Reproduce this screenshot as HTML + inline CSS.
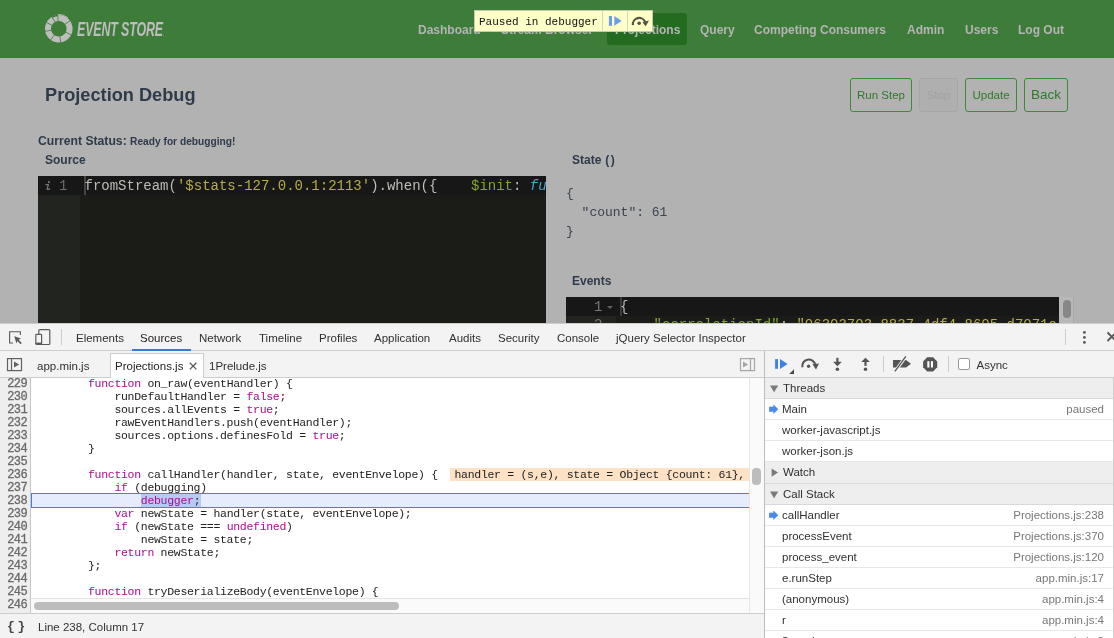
<!DOCTYPE html>
<html><head><meta charset="utf-8">
<style>
*{margin:0;padding:0;box-sizing:border-box}
html,body{width:1114px;height:638px;overflow:hidden;background:#b2b2b2;font-family:"Liberation Sans",sans-serif}
#root{position:absolute;left:0;top:0;width:1114px;height:638px;will-change:transform}
.a{position:absolute;white-space:pre}
#hdr{position:absolute;left:0;top:0;width:1114px;height:58px;background:#3e7c3a;border-bottom:1px solid #387a33}
.nav{position:absolute;top:23px;font-size:12px;font-weight:bold;color:#b4b4b4;line-height:14px}
.ptxt{color:#2d3b4a;font-weight:bold}
.btn{position:absolute;top:78px;height:34px;border:1px solid #3d8a37;border-radius:3px;color:#2e7a2a;font-size:11.5px;text-align:center;line-height:32px}
.mono{font-family:"Liberation Mono",monospace}
#dt{position:absolute;left:0;top:323px;width:1114px;height:315px;background:#fff;font-size:11.5px;color:#303030}
.code{position:absolute;font-family:"Liberation Mono",monospace;font-size:11.5px;letter-spacing:-0.3px;line-height:13px;white-space:pre;color:#222}
.k{color:#aa0d91}
.row{position:absolute;left:765px;width:348px;height:21px;border-bottom:1px solid #e8e8e8;background:#fff;font-size:11.5px;line-height:20px;color:#303030}
.sec{position:absolute;left:765px;width:348px;background:#eeeeee;border-bottom:1px solid #d8d8d8;font-size:11.5px;line-height:21px;color:#303030}
.r{position:absolute;right:9px;top:0;color:#777}
</style></head><body><div id="root">

<!-- HEADER -->
<div id="hdr"></div>
<svg class="a" style="left:44px;top:14px" width="30" height="30" viewBox="0 0 30 30">
  <circle cx="14.8" cy="14.7" r="10.8" fill="none" stroke="#bdbdbd" stroke-width="6"/>
  <path d="M8.00 3.39 A13.2 13.2 0 0 1 13.65 1.55" fill="none" stroke="#3e7c3a" stroke-width="1.6"/>
  <path d="M13.56 0.55 A14.2 14.2 0 0 1 23.93 3.82" fill="none" stroke="#bdbdbd" stroke-width="1"/>
  <line x1="14.21" y1="7.72" x2="13.54" y2="-0.25" stroke="#3e7c3a" stroke-width="0.8"/>
  <line x1="11.30" y1="8.64" x2="7.30" y2="1.71" stroke="#3e7c3a" stroke-width="0.8"/>
  <line x1="8.56" y1="11.52" x2="1.43" y2="7.89" stroke="#3e7c3a" stroke-width="0.8"/>
  <line x1="7.93" y1="16.04" x2="0.08" y2="17.56" stroke="#3e7c3a" stroke-width="0.8"/>
  <line x1="10.69" y1="20.36" x2="5.98" y2="26.84" stroke="#3e7c3a" stroke-width="0.8"/>
  <line x1="15.77" y1="21.63" x2="16.89" y2="29.55" stroke="#3e7c3a" stroke-width="0.8"/>
  <line x1="21.06" y1="17.83" x2="28.21" y2="21.42" stroke="#3e7c3a" stroke-width="0.8"/>
  <line x1="20.50" y1="10.64" x2="27.01" y2="5.99" stroke="#3e7c3a" stroke-width="0.8"/>
</svg>
<div class="a" style="left:77px;top:19px;font-size:20px;line-height:20px;font-weight:bold;font-style:italic;color:#bdbdbd;transform:scaleX(0.62);transform-origin:0 0;letter-spacing:-0.2px">EVENT STORE<span style="font-size:5px">.</span></div>

<div class="nav" style="left:418px">Dashboard</div>
<div class="nav" style="left:501px">Stream Browser</div>
<div class="a" style="left:607px;top:13px;width:80px;height:32px;background:#236b1f;border-radius:3px"></div>
<div class="nav" style="left:615px">Projections</div>
<div class="nav" style="left:700px">Query</div>
<div class="nav" style="left:754px">Competing Consumers</div>
<div class="nav" style="left:907px">Admin</div>
<div class="nav" style="left:965px">Users</div>
<div class="nav" style="left:1018px">Log Out</div>

<!-- paused overlay -->
<div class="a" style="left:474px;top:10px;width:179px;height:22px;background:#ffffc8;border:1px solid #c8c8b0"></div>
<div class="a mono" style="left:479px;top:15px;font-size:11px;line-height:14px;color:#111">Paused in debugger</div>
<div class="a" style="left:602px;top:11px;width:1px;height:20px;background:#d6d6c0"></div>
<div class="a" style="left:627px;top:11px;width:1px;height:20px;background:#d6d6c0"></div>
<svg class="a" style="left:603px;top:11px" width="24" height="20" viewBox="0 0 24 20">
  <rect x="5.9" y="5" width="3.1" height="9.8" fill="#6a9ee9"/>
  <path d="M11.3 5 L18.7 9.9 L11.3 14.8 Z" fill="#6a9ee9"/>
</svg>
<svg class="a" style="left:628px;top:11px" width="24" height="20" viewBox="0 0 24 20">
  <path d="M4.9 14.2 A6.4 6.4 0 0 1 17.2 11.0" fill="none" stroke="#545448" stroke-width="2.2"/>
  <path d="M14.4 11.2 L21 9.4 L17.8 15.2 Z" fill="#545448"/>
  <circle cx="11.2" cy="12.2" r="1.8" fill="#545448"/>
</svg>

<!-- PAGE -->
<div class="a ptxt" style="left:45px;top:85px;font-size:18.2px;line-height:20.5px">Projection Debug</div>
<div class="btn" style="left:850px;width:62px">Run Step</div>
<div class="btn" style="left:919px;width:39px;border-color:#a6a6a6;background:#afafaf;color:#a2a2a2">Stop</div>
<div class="btn" style="left:965px;width:52px">Update</div>
<div class="btn" style="left:1024px;width:44px;font-size:13.5px">Back</div>

<div class="a ptxt" style="left:38px;top:134px;font-size:12.2px;line-height:14px">Current Status: <span style="font-size:10.2px">Ready for debugging!</span></div>
<div class="a ptxt" style="left:45px;top:153px;font-size:12px;line-height:14px">Source</div>

<!-- source editor -->
<div class="a" style="left:38px;top:176px;width:508px;height:147px;background:#1b1c18"></div>
<div class="a" style="left:38px;top:176px;width:42px;height:147px;background:#22241f"></div>
<div class="a" style="left:38px;top:176px;width:508px;height:19px;background:#171717"></div>
<div class="a" style="left:80px;top:176px;width:1px;height:19px;background:#171717"></div>
<svg class="a" style="left:44px;top:180px" width="8" height="11" viewBox="0 0 8 11"><circle cx="4.9" cy="2.1" r="1.1" fill="#777"/><path d="M1.9 4.6 H4.4 L3.2 8.6 Q3 9.5 4 9.3 L5.6 9" fill="none" stroke="#777" stroke-width="1.3" stroke-linejoin="round" stroke-linecap="round"/></svg>
<div class="a mono" style="left:59px;top:179px;font-size:14px;line-height:15px;color:#6c6c6c">1</div>
<div class="a" style="left:84px;top:176px;width:2px;height:19px;background:#444"></div>
<div class="a mono" style="left:84.5px;top:177.5px;font-size:14px;line-height:16px;color:#bdbdb5;width:461px;overflow:hidden">fromStream(<span style="color:#b8ac48">'$stats-127.0.0.1:2113'</span>).when({    <span style="color:#80a82c">$init</span>: <span style="color:#4aa6c8;font-style:italic">function</span></div>

<div class="a ptxt" style="left:572px;top:153px;font-size:12px;line-height:14px">State <span style="letter-spacing:1.6px;margin-left:0.5px">()</span></div>
<div class="a mono" style="left:566px;top:184px;font-size:13px;line-height:19px;color:#3b4550">{
  "count": 61
}</div>
<div class="a ptxt" style="left:572px;top:274px;font-size:12px;line-height:14px">Events</div>

<!-- events editor -->
<div class="a" style="left:566px;top:297px;width:493px;height:26px;background:#1b1c18;overflow:hidden">
  <div class="a" style="left:0;top:0;width:50px;height:26px;background:#22241f"></div>
  <div class="a" style="left:0;top:0;width:493px;height:19px;background:#171717"></div>
  <div class="a mono" style="left:28px;top:2px;font-size:14px;line-height:16px;color:#777">1</div>
  <div class="a" style="left:41px;top:9px;width:0;height:0;border-left:3px solid transparent;border-right:3px solid transparent;border-top:3px solid #5e5e5e"></div>
  <div class="a" style="left:54px;top:0;width:2px;height:19px;background:#3a3a3a"></div>
  <div class="a mono" style="left:54px;top:2px;font-size:14px;line-height:16px;color:#bdbdb5">{</div>
  <div class="a mono" style="left:28px;top:20px;font-size:14px;line-height:16px;color:#777">2</div>
  <div class="a mono" style="left:54px;top:20px;font-size:14px;line-height:16px;color:#80a82c">    "correlationId"<span style="color:#bdbdb5">: </span><span style="color:#b8ac48">"06303703-8837-4df4-8605-d7071e</span></div>
</div>
<div class="a" style="left:1059px;top:297px;width:15px;height:26px;background:#b8b8b8;border-right:1px solid #a8a8a8"></div>
<div class="a" style="left:1063px;top:300px;width:8px;height:18px;background:#878787;border-radius:4px"></div>

<!-- DEVTOOLS -->
<div id="dt">
  <!-- main toolbar -->
  <div class="a" style="left:0;top:0;width:1114px;height:28px;background:#f3f3f3;border-top:1px solid #cdcdcd;border-bottom:1px solid #cdcdcd"></div>
  <svg class="a" style="left:0;top:0" width="70" height="28" viewBox="0 0 70 28">
    <path d="M13 20 H9.6 V8.7 H20.4 V12" fill="none" stroke="#5a5a5a" stroke-width="1.1"/>
    <path d="M14.3 13.2 L21 15.6 L18.6 16.8 L21.8 20 L20.6 21.2 L17.4 18 L16.4 20.4 Z" fill="#5a5a5a"/>
    <rect x="38.8" y="6.6" width="11" height="14.9" rx="1" fill="none" stroke="#5a5a5a" stroke-width="1.2"/>
    <rect x="35.8" y="11.4" width="5.8" height="9.9" rx="0.8" fill="#f3f3f3" stroke="#5a5a5a" stroke-width="1.2"/>
    <rect x="35.8" y="19.6" width="5.8" height="1.8" fill="#5a5a5a"/>
  </svg>
  <div class="a" style="left:61px;top:6px;width:1px;height:16px;background:#ccc"></div>
  <div class="a" style="left:1065px;top:6px;width:1px;height:16px;background:#ccc"></div>
  <svg class="a" style="left:1076px;top:4px" width="38" height="20" viewBox="0 0 38 20">
    <circle cx="8.4" cy="5.4" r="1.4" fill="#555"/><circle cx="8.4" cy="10.4" r="1.4" fill="#555"/><circle cx="8.4" cy="15.4" r="1.4" fill="#555"/>
    <path d="M31.5 5.5 L40 14 M40 5.5 L31.5 14" stroke="#555" stroke-width="1.9"/>
  </svg>
  <div class="a" style="left:76px;top:8px;line-height:15px">Elements</div>
  <div class="a" style="left:140px;top:8px;line-height:15px;color:#222">Sources</div>
  <div class="a" style="left:132px;top:26px;width:59px;height:2px;background:#3879d9"></div>
  <div class="a" style="left:199px;top:8px;line-height:15px">Network</div>
  <div class="a" style="left:259px;top:8px;line-height:15px">Timeline</div>
  <div class="a" style="left:319px;top:8px;line-height:15px">Profiles</div>
  <div class="a" style="left:374px;top:8px;line-height:15px">Application</div>
  <div class="a" style="left:449px;top:8px;line-height:15px">Audits</div>
  <div class="a" style="left:498px;top:8px;line-height:15px">Security</div>
  <div class="a" style="left:557px;top:8px;line-height:15px">Console</div>
  <div class="a" style="left:616px;top:8px;line-height:15px">jQuery Selector Inspector</div>

  <!-- tabs bar -->
  <div class="a" style="left:0;top:28px;width:765px;height:27px;background:#f3f3f3;border-bottom:1px solid #cdcdcd"></div>
  <div class="a" style="left:110px;top:30px;width:94px;height:25px;background:#fff;border:1px solid #cdcdcd;border-bottom:none"></div>
  <svg class="a" style="left:0;top:28px" width="30" height="27" viewBox="0 0 30 27">
    <rect x="7.5" y="7.6" width="14" height="12" fill="none" stroke="#626262" stroke-width="1.2"/>
    <line x1="11.5" y1="7.6" x2="11.5" y2="19.6" stroke="#626262" stroke-width="1.2"/>
    <path d="M14 10.6 L19.2 13.6 L14 16.6 Z" fill="#626262"/>
  </svg>
  <svg class="a" style="left:735px;top:28px" width="29" height="27" viewBox="0 0 29 27">
    <rect x="5.5" y="7.6" width="14" height="12" fill="none" stroke="#a6a6a6" stroke-width="1.2"/>
    <line x1="15.5" y1="7.6" x2="15.5" y2="19.6" stroke="#a6a6a6" stroke-width="1.2"/>
    <path d="M8 10.6 L13.2 13.6 L8 16.6 Z" fill="#a6a6a6"/>
  </svg>
  <div class="a" style="left:37px;top:36px;line-height:15px">app.min.js</div>
  <div class="a" style="left:115px;top:36px;line-height:15px;color:#222">Projections.js</div>
  <svg class="a" style="left:188px;top:38px" width="10" height="10"><path d="M1.8 1.8 L8.4 8.4 M8.4 1.8 L1.8 8.4" stroke="#5a5a5a" stroke-width="1.3"/></svg>
  <div class="a" style="left:209px;top:36px;line-height:15px">1Prelude.js</div>

  <!-- sidebar toolbar -->
  <div class="a" style="left:764px;top:28px;width:350px;height:27px;background:#f3f3f3;border-left:1px solid #bdbdbd;border-bottom:1px solid #cdcdcd"></div>
  <svg class="a" style="left:765px;top:28px" width="190" height="27" viewBox="765 351 190 27">
    <rect x="775.1" y="359.1" width="2.9" height="9.7" fill="#3f81ea"/>
    <path d="M780 359.1 L787.6 364 L780 368.9 Z" fill="#3f81ea"/>
    <path d="M794 369.2 L794 374 L789.2 374 Z" fill="#4a4a4a"/>
    <path d="M802.4 367.2 A6.4 6.2 0 0 1 815.2 364.6" fill="none" stroke="#555" stroke-width="2.1"/>
    <path d="M812.4 364.2 L819 363.6 L816 369.4 Z" fill="#555"/>
    <circle cx="808.6" cy="366.3" r="1.7" fill="#555"/>
    <rect x="836.3" y="357.8" width="2.2" height="4.5" fill="#555"/>
    <path d="M833 361.8 L841.8 361.8 L837.4 366.2 Z" fill="#555"/>
    <circle cx="837.4" cy="369.2" r="1.8" fill="#555"/>
    <rect x="864.4" y="361.4" width="2.2" height="4.5" fill="#555"/>
    <path d="M861.1 362 L869.9 362 L865.5 357.7 Z" fill="#555"/>
    <circle cx="865.5" cy="369.2" r="1.8" fill="#555"/>
    <path d="M893 360 L906 360 L911 363.8 L906 367.6 L893 367.6 Z" fill="#555"/>
    <line x1="894.9" y1="371.6" x2="906" y2="356.3" stroke="#f3f3f3" stroke-width="3.2"/>
    <line x1="894.9" y1="371.4" x2="905.8" y2="356.4" stroke="#555" stroke-width="1.3"/>
    <path d="M927.2 357.3 H933.1 L937.2 361.4 V367.3 L933.1 371.4 H927.2 L923.1 367.3 V361.4 Z" fill="#555"/>
    <rect x="927.3" y="361.2" width="2.1" height="6.3" fill="#fff"/>
    <rect x="930.9" y="361.2" width="2.1" height="6.3" fill="#fff"/>
  </svg>
  <div class="a" style="left:883px;top:33px;width:1px;height:16px;background:#ccc"></div>
  <div class="a" style="left:948px;top:33px;width:1px;height:16px;background:#ccc"></div>
  <div class="a" style="left:958px;top:35px;width:12px;height:12px;border:1px solid #9a9a9a;border-radius:2px;background:#fff"></div>
  <div class="a" style="left:976.5px;top:35px;line-height:15px;color:#333">Async</div>

  <!-- code gutter -->
  <div class="a" style="left:0;top:55px;width:31px;height:235px;background:#eeeeee;border-right:1px solid #c6c6c6"></div>
  <div class="code" style="left:2px;top:55px;color:#6a6a6a;text-align:right;width:25px;font-size:12px;letter-spacing:-0.6px;-webkit-text-stroke:0.3px #6a6a6a">229
230
231
232
233
234
235
236
237
238
239
240
241
242
243
244
245
246</div>
  <!-- highlight line -->
  <div class="a" style="left:31px;top:170px;width:718px;height:15px;background:#e6ecfc;border:1px solid #4b7fdc;border-right:none"></div>
  <div class="a" style="left:141px;top:171px;width:60px;height:13px;background:#b7cbf2"></div>
  <!-- inline values -->
  <div class="a" style="left:450px;top:145px;width:299px;height:13px;background:#fde2c6"></div>
  <div class="code" style="left:88px;top:54px"><span class="k">function</span> on_raw(eventHandler) {
    runDefaultHandler = <span class="k">false</span>;
    sources.allEvents = <span class="k">true</span>;
    rawEventHandlers.push(eventHandler);
    sources.options.definesFold = <span class="k">true</span>;
}

<span class="k">function</span> callHandler(handler, state, eventEnvelope) {
    <span class="k">if</span> (debugging)
        <span class="k">debugger</span>;
    <span class="k">var</span> newState = handler(state, eventEnvelope);
    <span class="k">if</span> (newState === <span class="k">undefined</span>)
        newState = state;
    <span class="k">return</span> newState;
};

<span class="k">function</span> tryDeserializeBody(eventEnvelope) {</div>
  <div class="code" style="left:454.5px;top:145px;width:295px;overflow:hidden">handler = (s,e), state = Object {count: 61}, eventEnvelope = Object {</div>
  <div class="a" style="left:1113px;top:55px;width:1px;height:260px;background:#cfcfcf"></div>
  <!-- code v scrollbar -->
  <div class="a" style="left:749px;top:55px;width:15px;height:235px;background:#fafafa;border-left:1px solid #e6e6e6"></div>
  <div class="a" style="left:752px;top:145px;width:9px;height:17px;background:#bdbdbd;border-radius:4px"></div>
  <!-- h scrollbar -->
  <div class="a" style="left:31px;top:275px;width:718px;height:15px;background:#fafafa;border-top:1px solid #e4e4e4"></div>
  <div class="a" style="left:34px;top:279px;width:365px;height:8px;background:#bdbdbd;border-radius:4px"></div>
  <!-- status bar -->
  <div class="a" style="left:0;top:290px;width:764px;height:25px;background:#f3f3f3;border-top:1px solid #cdcdcd"></div>
  <div class="a mono" style="left:7px;top:297px;font-size:13px;line-height:14px;color:#444;font-weight:bold;letter-spacing:-2.6px">{ }</div>
  <div class="a" style="left:38px;top:297px;line-height:15px;color:#333">Line 238, Column 17</div>

  <!-- sidebar -->
  <div class="a" style="left:764px;top:55px;width:1px;height:260px;background:#bdbdbd"></div>
  <div class="sec" style="top:55px;height:21px;padding-left:18px"><svg class="a" style="left:5px;top:7px" width="9" height="8"><path d="M0 0.6 H8.2 L4.1 7.2 Z" fill="#7a7a7a"/></svg>Threads</div>
  <div class="row" style="top:76px;padding-left:17px"><svg class="a" style="left:4px;top:5.8px" width="11" height="10"><path d="M0.2 2 H4.6 V0 L9 4.2 L4.6 8.4 V6.4 H0.2 Z" fill="#4a8af0" stroke="#4a8af0" stroke-width="0.6" stroke-linejoin="round"/></svg>Main<span class="r">paused</span></div>
  <div class="row" style="top:97px;padding-left:17px">worker-javascript.js</div>
  <div class="row" style="top:118px;padding-left:17px">worker-json.js</div>
  <div class="sec" style="top:139px;height:22px;padding-left:18px"><svg class="a" style="left:6px;top:6px" width="8" height="10"><path d="M0.6 0.5 V8.7 L7 4.6 Z" fill="#7a7a7a"/></svg>Watch</div>
  <div class="sec" style="top:161px;height:21px;padding-left:18px"><svg class="a" style="left:5px;top:7px" width="9" height="8"><path d="M0 0.6 H8.2 L4.1 7.2 Z" fill="#7a7a7a"/></svg>Call Stack</div>
  <div class="row" style="top:182px;padding-left:17px"><svg class="a" style="left:4px;top:5.8px" width="11" height="10"><path d="M0.2 2 H4.6 V0 L9 4.2 L4.6 8.4 V6.4 H0.2 Z" fill="#4a8af0" stroke="#4a8af0" stroke-width="0.6" stroke-linejoin="round"/></svg>callHandler<span class="r">Projections.js:238</span></div>
  <div class="row" style="top:203px;padding-left:17px">processEvent<span class="r">Projections.js:370</span></div>
  <div class="row" style="top:224px;padding-left:17px">process_event<span class="r">Projections.js:120</span></div>
  <div class="row" style="top:245px;padding-left:17px">e.runStep<span class="r">app.min.js:17</span></div>
  <div class="row" style="top:266px;padding-left:17px">(anonymous)<span class="r">app.min.js:4</span></div>
  <div class="row" style="top:287px;padding-left:17px">r<span class="r">app.min.js:4</span></div>
  <div class="row" style="top:308px;padding-left:17px">$.ready<span class="r">app.min.js:3</span></div>
</div>

</div></body></html>
